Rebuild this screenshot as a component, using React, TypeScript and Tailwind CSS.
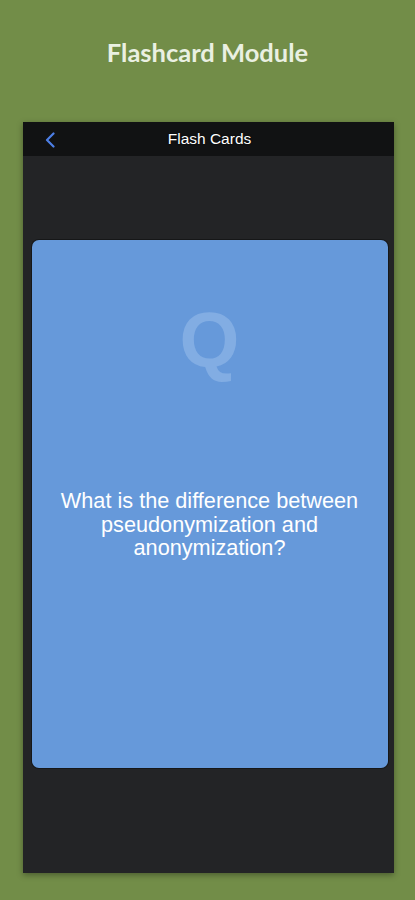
import React from "react";

export default function App() {
  return (
    <div className="w-[415px] h-[900px] bg-[#728d48] flex flex-col items-center overflow-hidden" style={{ fontFamily: "'Liberation Sans', Arial, sans-serif" }}>
      <div className="h-[122px] w-full flex justify-center pt-[35px]">
        <h1 className="text-[25.5px] leading-[34px] font-bold text-[#eaf0e2]" style={{ fontFamily: "Lato, 'Open Sans', sans-serif" }}>
          Flashcard Module
        </h1>
      </div>
      <div className="ml-[1px] w-[371px] h-[751px] bg-[#232426] flex flex-col shadow-[0_2px_6px_rgba(0,0,0,0.35)]">
        <div className="h-[34px] bg-[#111213] flex items-center relative">
          <div className="absolute left-[21px] top-[10px]">
            <svg width="12" height="16" viewBox="0 0 12 16" fill="none">
              <path d="M9.5 1.5 L3 8 L9.5 14.5" stroke="#4d7fe6" strokeWidth="2.2" strokeLinecap="round" strokeLinejoin="round" />
            </svg>
          </div>
          <div className="flex-1 pl-[3px] text-center text-[15.5px] text-white" style={{ textShadow: "0 0 2px rgba(0,0,0,0.8)" }}>
            Flash Cards
          </div>
        </div>
        <div className="flex-1 pl-[9px] pr-[6px] pt-[84px] pb-[105px] flex">
          <div className="flex-1 bg-[#6699da] rounded-[7px] shadow-[0_0_0_1px_rgba(0,0,0,0.35)] flex flex-col items-center">
            <div className="mt-[60px] text-[77px] leading-[80px] font-bold text-[#82ade3]">Q</div>
            <div className="mt-[109px] px-[16px] text-center text-[21.7px] leading-[23.5px] text-white">
              What is the difference between pseudonymization and anonymization?
            </div>
          </div>
        </div>
      </div>
    </div>
  );
}
